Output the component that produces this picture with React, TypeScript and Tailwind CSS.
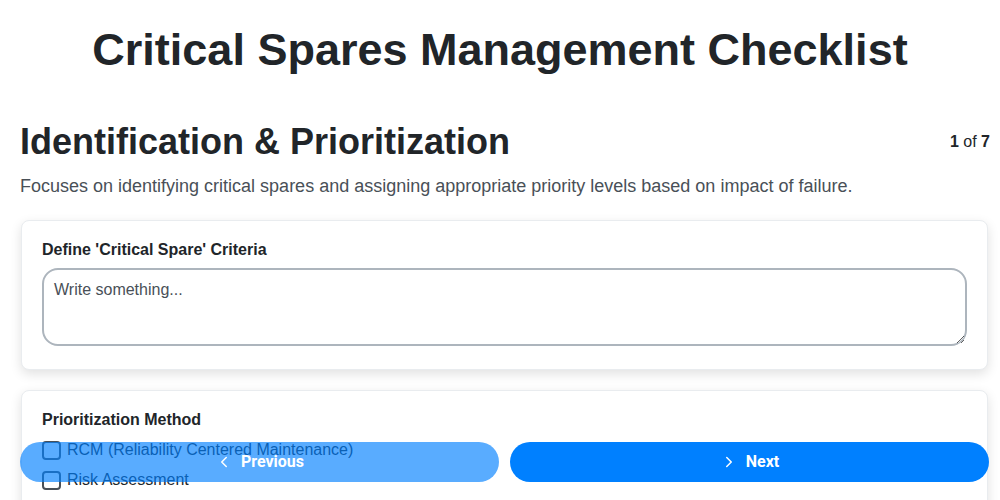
import { ChevronLeft, ChevronRight } from "lucide-react";

const options = [
  "RCM (Reliability Centered Maintenance)",
  "Risk Assessment",
  "Criticality Matrix",
];

export default function App() {
  return (
    <div className="min-h-screen bg-white pr-[10px] pb-24 pl-5 font-['Liberation_Sans',Arial,sans-serif] text-[#212529]">
      <h1 className="-mr-[10px] -ml-5 pt-[22px] pb-[42px] text-center text-[45px] leading-[56px] font-bold">
        Critical Spares Management Checklist
      </h1>

      <div className="flex items-center justify-between">
        <h2 className="text-[36px] leading-[44px] font-bold">
          Identification &amp; Prioritization
        </h2>
        <div className="text-base">
          <span className="font-bold">1</span> of <span className="font-bold">7</span>
        </div>
      </div>

      <p className="mt-[10px] text-[18px] leading-6 text-[#495057]">
        Focuses on identifying critical spares and assigning appropriate priority levels based on impact of failure.
      </p>

      <div className="mt-[22px] flex flex-col gap-5 pr-[2px] pl-px">
        <div className="rounded-lg border border-[#e9ecef] bg-white px-5 pt-[17px] pb-[23px] shadow-[0_4px_12px_rgba(0,0,0,0.12)]">
          <label className="block text-base font-bold">
            Define 'Critical Spare' Criteria
          </label>
          <textarea
            placeholder="Write something..."
            className="mt-[6px] block h-[78px] w-full resize-y rounded-2xl border-2 border-[#adb5bd] px-[10px] py-[10px] text-base leading-5 text-[#212529] placeholder:text-[#495057] focus:outline-none"
          />
        </div>

        <div className="rounded-lg border border-[#e9ecef] bg-white px-5 pt-[17px] pb-5 shadow-[0_4px_12px_rgba(0,0,0,0.12)]">
          <div className="text-base font-bold">Prioritization Method</div>
          <div className="mt-[8px] flex flex-col gap-[10px]">
            {options.map((o) => (
              <label key={o} className="flex items-center gap-[6px] text-base leading-5">
                <span className="h-[19px] w-[19px] shrink-0 rounded-[4px] border-2 border-[#495057] bg-white" />
                {o}
              </label>
            ))}
          </div>
        </div>
      </div>

      <div className="fixed right-[11px] bottom-[18px] left-5 flex gap-[11px] font-['Roboto',sans-serif]">
        <button
          disabled
          className="flex h-10 flex-1 items-center justify-center gap-2 rounded-full bg-[#0080ff] text-base font-bold text-white opacity-65"
        >
          <ChevronLeft size={18} strokeWidth={2} />
          Previous
        </button>
        <button className="flex h-10 flex-1 items-center justify-center gap-2 rounded-full bg-[#0080ff] text-base font-bold text-white">
          <ChevronRight size={18} strokeWidth={2} />
          Next
        </button>
      </div>
    </div>
  );
}
